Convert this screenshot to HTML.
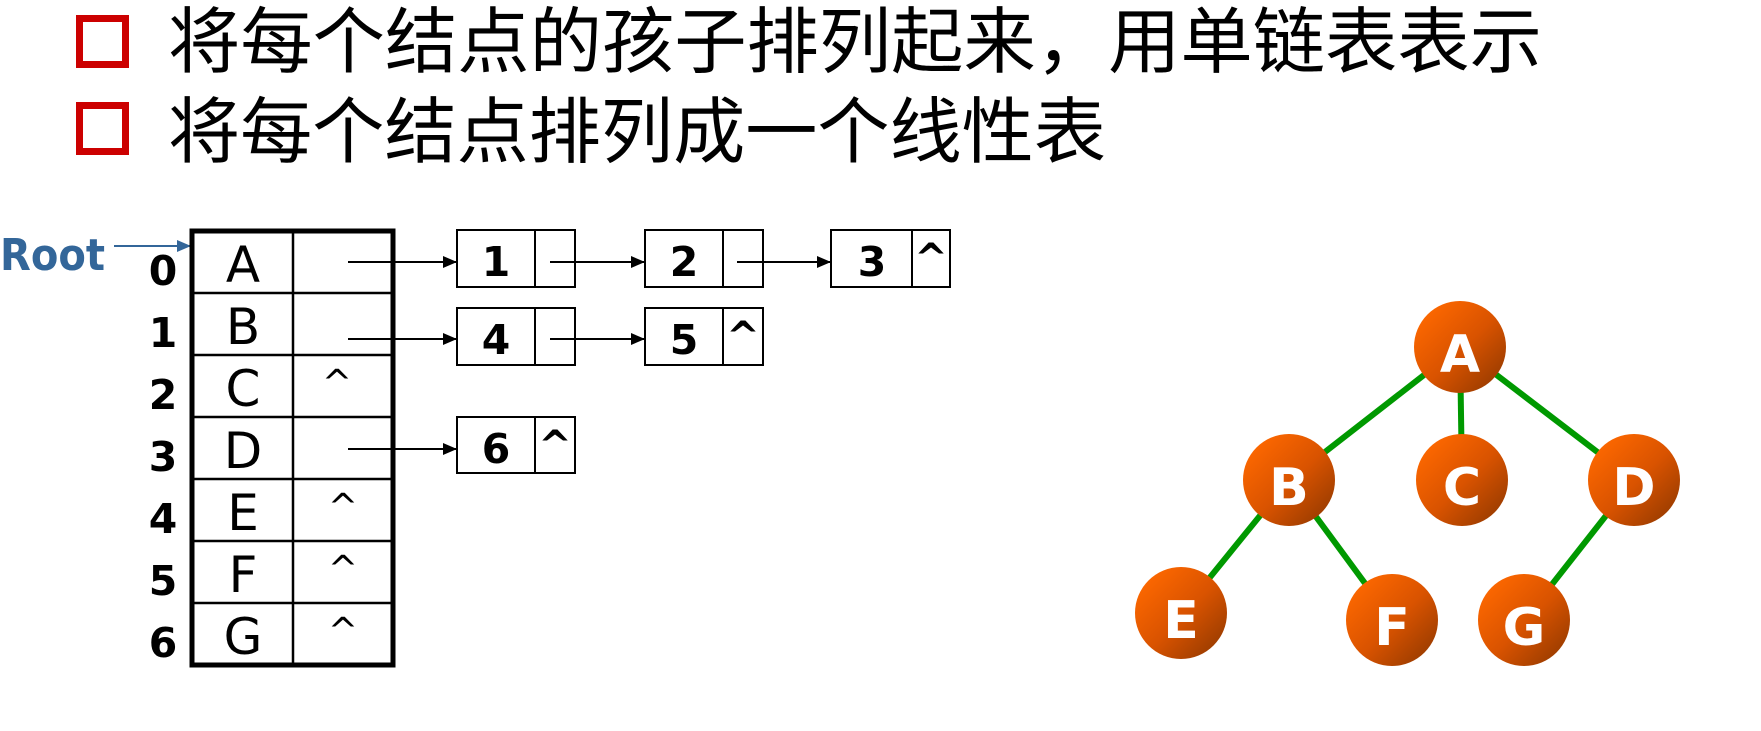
<!DOCTYPE html>
<html><head><meta charset="utf-8"><style>
html,body{margin:0;padding:0;background:#fff;}
svg{display:block}
</style></head><body>
<svg width="1761" height="731" viewBox="0 0 1761 731" xmlns="http://www.w3.org/2000/svg">
<defs>
<marker id="ah" markerWidth="14" markerHeight="12" refX="13" refY="6" orient="auto" markerUnits="userSpaceOnUse"><path d="M0,0 L14,6 L0,12 Z" fill="#000"/></marker>
<marker id="bh" markerWidth="14" markerHeight="12" refX="13" refY="6" orient="auto" markerUnits="userSpaceOnUse"><path d="M0,0 L14,6 L0,12 Z" fill="#336699"/></marker>
<linearGradient id="og" x1="0.15" y1="0.15" x2="0.9" y2="0.9"><stop offset="0" stop-color="#fa6600"/><stop offset="0.5" stop-color="#d95300"/><stop offset="1" stop-color="#9a3c00"/></linearGradient>
</defs>
<!-- header -->
<rect x="79.5" y="18.5" width="46" height="46" fill="none" stroke="#cc0000" stroke-width="7"/>
<rect x="79.5" y="105.5" width="46" height="46" fill="none" stroke="#cc0000" stroke-width="7"/>
<g font-family="'Noto Sans CJK SC','WenQuanYi Zen Hei',sans-serif" font-size="72" fill="#000">
<text x="168" y="67" textLength="1374" lengthAdjust="spacingAndGlyphs">将每个结点的孩子排列起来，用单链表表示</text>
<text x="168" y="157" textLength="938" lengthAdjust="spacingAndGlyphs">将每个结点排列成一个线性表</text>
</g>
<!-- Root -->
<text x="0" y="270" font-family="'DejaVu Sans',sans-serif" font-weight="bold" font-size="44" fill="#336699" textLength="105" lengthAdjust="spacingAndGlyphs">Root</text>
<line x1="114" y1="246" x2="190" y2="246" stroke="#336699" stroke-width="2" marker-end="url(#bh)"/>
<!-- table -->
<g stroke="#000" fill="none">
<rect x="192" y="231" width="201" height="434" stroke-width="5"/>
<line x1="293" y1="231" x2="293" y2="665" stroke-width="2.5"/>
<line x1="192" y1="293" x2="393" y2="293" stroke-width="2.5"/>
<line x1="192" y1="355" x2="393" y2="355" stroke-width="2.5"/>
<line x1="192" y1="417" x2="393" y2="417" stroke-width="2.5"/>
<line x1="192" y1="479" x2="393" y2="479" stroke-width="2.5"/>
<line x1="192" y1="541" x2="393" y2="541" stroke-width="2.5"/>
<line x1="192" y1="603" x2="393" y2="603" stroke-width="2.5"/>
</g>
<g font-family="'DejaVu Sans',sans-serif" font-weight="bold" font-size="41" text-anchor="middle" fill="#000">
<text x="163" y="285">0</text><text x="163" y="347">1</text><text x="163" y="409">2</text><text x="163" y="471">3</text><text x="163" y="533">4</text><text x="163" y="595">5</text><text x="163" y="657">6</text>
</g>
<g font-family="'DejaVu Sans',sans-serif" font-size="50" text-anchor="middle" fill="#000">
<text x="243" y="282">A</text><text x="243" y="344">B</text><text x="243" y="406">C</text><text x="243" y="468">D</text><text x="243" y="530">E</text><text x="243" y="592">F</text><text x="243" y="654">G</text>
</g>
<g font-family="'DejaVu Sans',sans-serif" font-size="36" text-anchor="middle" fill="#000">
<text x="337" y="395">^</text><text x="343" y="519">^</text><text x="343" y="581">^</text><text x="343" y="643">^</text>
</g>
<!-- linked lists -->
<g stroke="#000" stroke-width="2" fill="none">
<rect x="457" y="230" width="118" height="57"/><line x1="535" y1="230" x2="535" y2="287"/>
<rect x="645" y="230" width="118" height="57"/><line x1="723" y1="230" x2="723" y2="287"/>
<rect x="831" y="230" width="119" height="57"/><line x1="912" y1="230" x2="912" y2="287"/>
<rect x="457" y="308" width="118" height="57"/><line x1="535" y1="308" x2="535" y2="365"/>
<rect x="645" y="308" width="118" height="57"/><line x1="723" y1="308" x2="723" y2="365"/>
<rect x="457" y="417" width="118" height="56"/><line x1="535" y1="417" x2="535" y2="473"/>
<line x1="348" y1="262" x2="456" y2="262" marker-end="url(#ah)"/>
<line x1="550" y1="262" x2="644" y2="262" marker-end="url(#ah)"/>
<line x1="737" y1="262" x2="830" y2="262" marker-end="url(#ah)"/>
<line x1="348" y1="339" x2="456" y2="339" marker-end="url(#ah)"/>
<line x1="550" y1="339" x2="644" y2="339" marker-end="url(#ah)"/>
<line x1="348" y1="449" x2="456" y2="449" marker-end="url(#ah)"/>
</g>
<g font-family="'DejaVu Sans',sans-serif" font-weight="bold" font-size="41" text-anchor="middle" fill="#000">
<text x="496" y="276">1</text><text x="684" y="276">2</text><text x="872" y="276">3</text>
<text x="496" y="354">4</text><text x="684" y="354">5</text>
<text x="496" y="463">6</text>
</g>
<g font-family="'DejaVu Sans',sans-serif" font-weight="bold" font-size="40" text-anchor="middle" fill="#000">
<text x="931" y="272">^</text><text x="743" y="350">^</text><text x="555" y="459">^</text>
</g>
<!-- tree -->
<g stroke="#009900" stroke-width="6">
<line x1="1460" y1="347" x2="1289" y2="480"/>
<line x1="1460" y1="347" x2="1462" y2="480"/>
<line x1="1460" y1="347" x2="1634" y2="480"/>
<line x1="1289" y1="480" x2="1181" y2="613"/>
<line x1="1289" y1="480" x2="1392" y2="620"/>
<line x1="1634" y1="480" x2="1524" y2="620"/>
</g>
<g fill="url(#og)">
<circle cx="1460" cy="347" r="46"/><circle cx="1289" cy="480" r="46"/><circle cx="1462" cy="480" r="46"/><circle cx="1634" cy="480" r="46"/>
<circle cx="1181" cy="613" r="46"/><circle cx="1392" cy="620" r="46"/><circle cx="1524" cy="620" r="46"/>
</g>
<g font-family="'DejaVu Sans',sans-serif" font-weight="bold" font-size="52" text-anchor="middle" fill="#fff">
<text x="1460" y="372">A</text><text x="1289" y="505">B</text><text x="1462" y="505">C</text><text x="1634" y="505">D</text>
<text x="1181" y="638">E</text><text x="1392" y="645">F</text><text x="1524" y="645">G</text>
</g>
</svg>
</body></html>
